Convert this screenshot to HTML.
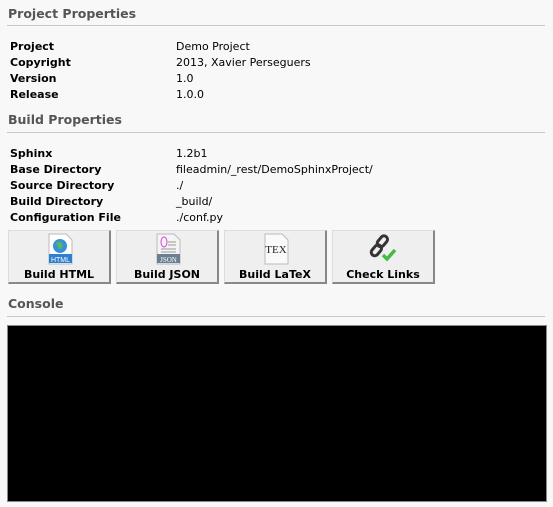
<!DOCTYPE html>
<html><head><style>
body{margin:0;background:#f8f8f8;width:553px;height:507px;overflow:hidden;font-family:"DejaVu Sans",Verdana,sans-serif;font-size:11px;color:#000;position:relative}
.h{position:absolute;left:8px;font-weight:bold;font-size:12.5px;color:#555}
.hr{position:absolute;left:7px;width:538px;height:1px;background:#c8c8c8}
.r{position:absolute;left:10px;font-weight:bold;font-size:11px}
.v{position:absolute;left:176px;font-size:11px}
.b{position:absolute;top:230px;background:#efefef;border:1px solid #ddd;border-right:2px solid #888;border-bottom:2px solid #888;box-sizing:border-box;width:103px;height:54px;text-align:center}
.b span{position:absolute;left:0;right:0;top:37px;font-weight:bold;font-size:11px}
.b svg{position:absolute;left:36px;top:2px}
</style></head><body>
<div class="h" style="top:6px">Project Properties</div>
<div class="hr" style="top:25px"></div>
<div class="r" style="top:40px">Project</div><div class="v" style="top:40px">Demo Project</div>
<div class="r" style="top:56px">Copyright</div><div class="v" style="top:56px">2013, Xavier Perseguers</div>
<div class="r" style="top:72px">Version</div><div class="v" style="top:72px">1.0</div>
<div class="r" style="top:88px">Release</div><div class="v" style="top:88px">1.0.0</div>
<div class="h" style="top:112px">Build Properties</div>
<div class="hr" style="top:132px"></div>
<div class="r" style="top:147px">Sphinx</div><div class="v" style="top:147px">1.2b1</div>
<div class="r" style="top:163px">Base Directory</div><div class="v" style="top:163px">fileadmin/_rest/DemoSphinxProject/</div>
<div class="r" style="top:179px">Source Directory</div><div class="v" style="top:179px">./</div>
<div class="r" style="top:195px">Build Directory</div><div class="v" style="top:195px">_build/</div>
<div class="r" style="top:211px">Configuration File</div><div class="v" style="top:211px">./conf.py</div>

<div class="b" style="left:8px"><svg width="30" height="32"><path d="M4 1h17l6 6v24H4z" fill="#fff" stroke="#bbb"/><circle cx="15" cy="13" r="7" fill="#3a8fd8"/><path d="M11 10q4-3 6 1t-3 5" fill="#5b5" /><rect x="4" y="21" width="23" height="9" fill="#2f7fd0"/><text x="15.5" y="29" font-size="7" fill="#fff" text-anchor="middle" font-family="Liberation Sans">HTML</text></svg><span>Build HTML</span></div>
<div class="b" style="left:116px"><svg width="30" height="32"><path d="M4 1h17l6 6v24H4z" fill="#f4f4f4" stroke="#bbb"/><ellipse cx="11" cy="9" rx="3" ry="5" fill="none" stroke="#d4d"/><path d="M15 9h8M15 12h8M8 16h15M8 19h15" stroke="#999"/><rect x="4" y="21" width="23" height="9" fill="#6b7f94"/><text x="15.5" y="29" font-size="7" fill="#fff" text-anchor="middle" font-family="Liberation Serif">JSON</text></svg><span>Build JSON</span></div>
<div class="b" style="left:224px"><svg width="30" height="32"><path d="M4 1h17l6 6v24H4z" fill="#fafafa" stroke="#bbb"/><text x="15" y="20" font-size="11" fill="#222" text-anchor="middle" font-family="Liberation Serif">TEX</text></svg><span>Build LaTeX</span></div>
<div class="b" style="left:332px"><svg width="30" height="32"><g fill="none" stroke="#333" stroke-width="3"><rect x="10" y="2" width="7" height="12" rx="3.5" transform="rotate(40 13 8)"/><rect x="4" y="11" width="7" height="12" rx="3.5" transform="rotate(40 7 17)"/></g><path d="M14 22l4 4 8-9" fill="none" stroke="#4b4" stroke-width="3.5"/></svg><span>Check Links</span></div>

<div class="h" style="top:296px">Console</div>
<div class="hr" style="top:316px"></div>
<div style="position:absolute;left:7px;top:325px;width:540px;height:177px;background:#000;border:1px solid #888;box-sizing:border-box"></div>
</body></html>
